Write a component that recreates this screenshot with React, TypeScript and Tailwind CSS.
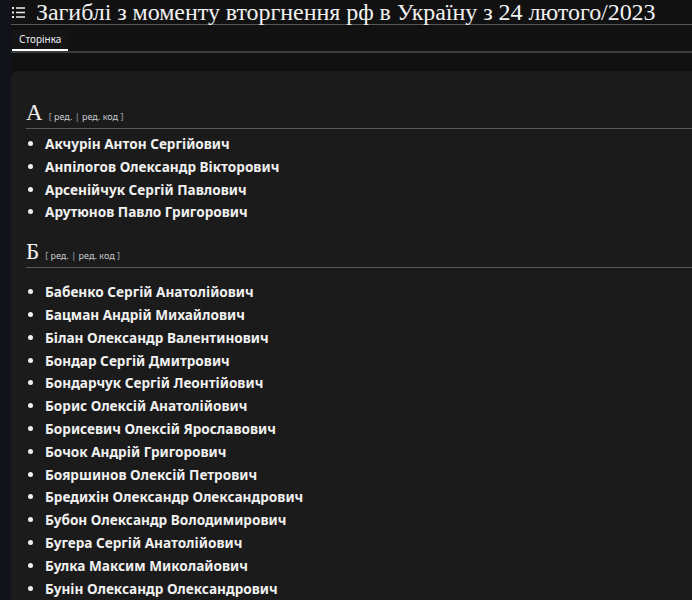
import React from 'react';

const SECTIONS: { letter: string; gap: string; names: string[] }[] = [
  {
    letter: 'А',
    gap: 'mt-[4px]',
    names: [
      'Акчурін Антон Сергійович',
      'Анпілогов Олександр Вікторович',
      'Арсенійчук Сергій Павлович',
      'Арутюнов Павло Григорович',
    ],
  },
  {
    letter: 'Б',
    gap: 'mt-[13px]',
    names: [
      'Бабенко Сергій Анатолійович',
      'Бацман Андрій Михайлович',
      'Білан Олександр Валентинович',
      'Бондар Сергій Дмитрович',
      'Бондарчук Сергій Леонтійович',
      'Борис Олексій Анатолійович',
      'Борисевич Олексій Ярославович',
      'Бочок Андрій Григорович',
      'Бояршинов Олексій Петрович',
      'Бредихін Олександр Олександрович',
      'Бубон Олександр Володимирович',
      'Бугера Сергій Анатолійович',
      'Булка Максим Миколайович',
      'Бунін Олександр Олександрович',
    ],
  },
];

const TocIcon = () => (
  <svg className="shrink-0" width="13" height="11" viewBox="0 0 13 11" fill="#eaecf0">
    <rect x="0" y="0" width="2" height="2" />
    <rect x="4" y="0.25" width="9" height="1.5" />
    <rect x="0" y="4.5" width="2" height="2" />
    <rect x="4" y="4.75" width="9" height="1.5" />
    <rect x="0" y="9" width="2" height="2" />
    <rect x="4" y="9.25" width="9" height="1.5" />
  </svg>
);

const EditLinks = () => (
  <span className="ml-[6px] text-[9px] text-[#a2a9b1] font-['Noto_Sans',sans-serif]">
    [ <span className="text-[#c8ccd1]">ред.</span> | <span className="text-[#c8ccd1]">ред. код</span> ]
  </span>
);

const Section: React.FC<{ letter: string; gap: string; names: string[] }> = ({ letter, gap, names }) => (
  <section>
    <h2 className="flex items-baseline border-b border-[#54595d] ml-[15px]">
      <span className="text-[23px] leading-[30px] text-[#f1f1f1] font-['Liberation_Serif',serif]">{letter}</span>
      <EditLinks />
    </h2>
    <ul className={`${gap} mb-[13px] ml-[20px] list-disc pl-[14px] text-[13.6px] font-bold text-[#f1f1f1] font-['Noto_Sans',sans-serif] marker:text-[#f1f1f1]`}>
      {names.map((n) => (
        <li key={n} className="leading-[22.8px]">{n}</li>
      ))}
    </ul>
  </section>
);

export default function App() {
  return (
    <div className="h-[600px] overflow-hidden bg-[#101418] pl-[11px]">
      <div className="h-full bg-[#111111]">
        <header className="flex items-center gap-[11px] border-b border-[#54595d] h-[25px] pl-[1px]">
          <TocIcon />
          <h1 className="text-[24px] leading-[25px] tracking-[-0.05px] text-[#f1f1f1] font-['Liberation_Serif',serif] whitespace-nowrap">
            Загиблі з моменту вторгнення рф в Україну з 24 лютого/2023
          </h1>
        </header>
        <nav className="h-[28px] border-b-2 border-[#3a3d40]">
          <div className="ml-[1px] inline-block h-[21px] border-b-2 border-white bg-[#151515] px-[7px] pt-[2px] text-[10px] leading-[15px] text-[#eaecf0] font-['Noto_Sans',sans-serif]">
            Сторінка
          </div>
        </nav>
        <main className="mt-[18px] h-full rounded-tl-[6px] bg-[#1b1b1b] pt-[27px]">
          {SECTIONS.map((s) => (
            <Section key={s.letter} letter={s.letter} gap={s.gap} names={s.names} />
          ))}
        </main>
      </div>
    </div>
  );
}
